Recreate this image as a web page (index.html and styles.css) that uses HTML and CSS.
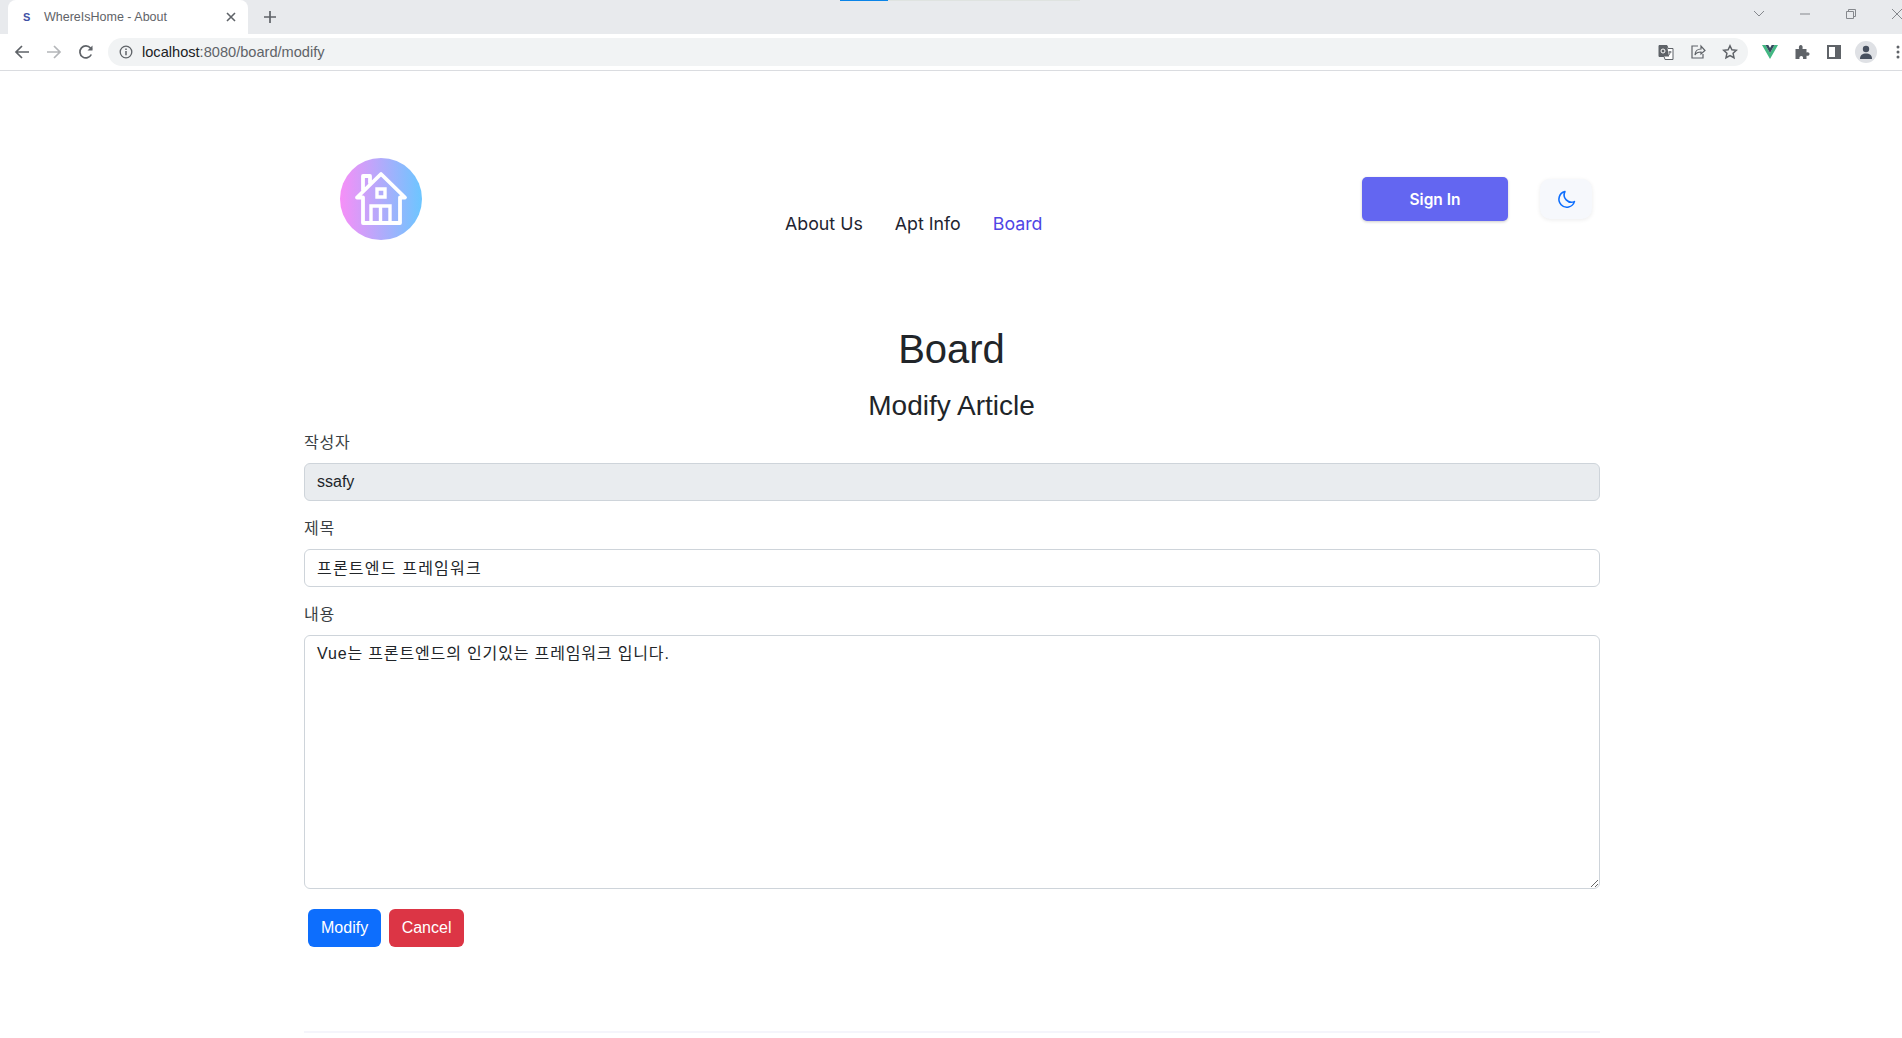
FILE: index.html
```html
<!DOCTYPE html>
<html lang="ko">
<head>
    <meta charset="UTF-8">
    <meta name="viewport" content="width=device-width, initial-scale=1.0">
    <title>WhereIsHome - About</title>
    <link rel="stylesheet" href="styles.css">
</head>
<body>
    <div class="browser">
        <div class="tab-strip">
            <div class="tab">
                <span class="tab-favicon">S</span>
                <span class="tab-title">WhereIsHome - About</span>
                <svg class="tab-close" width="10" height="10" viewBox="0 0 10 10"><path d="M1 1l8 8M9 1l-8 8" stroke="#5f6368" stroke-width="1.6"/></svg>
            </div>
            <svg class="tab-new" width="14" height="14" viewBox="0 0 14 14"><path d="M7 1v12M1 7h12" stroke="#5f6368" stroke-width="1.7"/></svg>
            <div class="share-bar"><span class="share-progress"></span></div>
            <div class="window-controls">
                <span class="win-slot"><svg width="14" height="10" viewBox="0 0 14 10"><path d="M2 2l5 5 5-5" fill="none" stroke="#85888d" stroke-width="1"/></svg></span>
                <span class="win-slot"><svg width="12" height="2" viewBox="0 0 12 2"><path d="M1 1h10" stroke="#85888d"/></svg></span>
                <span class="win-slot"><svg width="12" height="12" viewBox="0 0 12 12"><path d="M3.500 3V1.500h7v7H9M1.500 3.500h7v7h-7z" fill="none" stroke="#85888d"/></svg></span>
                <span class="win-slot"><svg width="12" height="12" viewBox="0 0 12 12"><path d="M1 1l10 10M11 1L1 11" stroke="#85888d"/></svg></span>
            </div>
        </div>
        <div class="toolbar">
            <svg class="nav-icon" width="16" height="16" viewBox="0 0 16 16"><path d="M15 8H2M8 2L2 8l6 6" fill="none" stroke="#5f6368" stroke-width="1.7"/></svg>
            <svg class="nav-icon" width="16" height="16" viewBox="0 0 16 16"><path d="M1 8h13M8 2l6 6-6 6" fill="none" stroke="#b4b6b9" stroke-width="1.7"/></svg>
            <svg class="nav-icon" width="16" height="16" viewBox="0 0 16 16"><path d="M13.300 10.500A6 6 0 1 1 12.500 4L14 5.500" fill="none" stroke="#5f6368" stroke-width="1.7"/><path d="M14.500 1.500v5h-5z" fill="#5f6368"/></svg>
            <div class="omnibox">
                <svg width="14" height="14" viewBox="0 0 14 14"><circle cx="7" cy="7" r="5.800" fill="none" stroke="#5f6368" stroke-width="1.300"/><path d="M7 6v4.200M7 3.600v1.300" stroke="#5f6368" stroke-width="1.500"/></svg>
                <span class="url"><b>localhost</b>:8080/board/modify</span>
                <div class="omnibox-actions">
                    <span class="icon-slot"><svg width="16" height="16" viewBox="0 0 16 16"><path d="M1 1.500h8l1 3h5v11H7l-1-3H1z" fill="#fff" stroke="#5f6368"/><path d="M1 1.500h8l2 11H1z" fill="#5f6368"/><circle cx="5" cy="7" r="2" fill="none" stroke="#fff"/><path d="M10.500 8h3M12 7v1c0 2-1 3-2 4" fill="none" stroke="#5f6368"/></svg></span>
                    <span class="icon-slot"><svg width="16" height="16" viewBox="0 0 16 16"><path d="M8 2H2v12h11v-4" fill="none" stroke="#5f6368" stroke-width="1.200"/><path d="M5 11c0-4 3-6 6-6V2l4 4.500L11 10V8c-3 0-5 1-6 3z" fill="#f1f3f4" stroke="#5f6368" stroke-width="1.200"/></svg></span>
                    <span class="icon-slot"><svg width="16" height="16" viewBox="0 0 16 16"><path d="M8 1.800l1.900 4 4.400.5-3.200 3 .9 4.400L8 11.500l-4 2.200.9-4.400-3.200-3 4.400-.5z" fill="none" stroke="#5f6368" stroke-width="1.500"/></svg></span>
                </div>
            </div>
            <div class="extensions">
                <span class="icon-slot"><svg width="16" height="14" viewBox="0 0 16 14"><path d="M0 0h3.500L8 8l4.500-8H16L8 14z" fill="#42b883"/><path d="M3.500 0h2.800L8 3l1.700-3h2.800L8 8z" fill="#35495e"/></svg></span>
                <span class="icon-slot"><svg width="16" height="16" viewBox="0 0 16 16"><path d="M1.500 5H5c-.5-3 .5-4 1.800-4s2.300 1 1.700 4h4v3.500c2-.6 3 .3 3 1.500s-1 2.200-3 1.700V15H9c.5-2-.5-3-1.700-3S5 13 5.500 15h-4z" fill="#5f6368"/></svg></span>
                <span class="icon-slot"><svg width="14" height="14" viewBox="0 0 14 14"><path d="M0 0h14v14H0z" fill="#5f6368"/><path d="M2 2h6v10H2z" fill="#fff"/></svg></span>
                <span class="icon-slot"><span class="avatar"><svg width="14" height="14" viewBox="0 0 14 14"><circle cx="7" cy="4" r="3.200" fill="#47505f"/><path d="M1 14c0-4 2.500-5.500 6-5.500s6 1.500 6 5.500z" fill="#47505f"/></svg></span></span>
                <span class="icon-slot"><svg width="4" height="14" viewBox="0 0 4 14"><circle cx="2" cy="2" r="1.500" fill="#5f6368"/><circle cx="2" cy="7" r="1.500" fill="#5f6368"/><circle cx="2" cy="12" r="1.500" fill="#5f6368"/></svg></span>
            </div>
        </div>
    </div>

    <div class="container">
        <header class="site-header">
            <svg class="logo" width="82" height="82" viewBox="0 0 82 82">
                <defs>
                    <linearGradient id="logo-grad" x1="0" y1="0" x2="1" y2="0">
                        <stop offset="0" stop-color="#f78ff7"/>
                        <stop offset="1" stop-color="#6cc6ff"/>
                    </linearGradient>
                </defs>
                <circle cx="41" cy="41" r="41" fill="url(#logo-grad)"/>
                <path d="M17 39.500L41 16l24 23.500h-5V65H23V39.500zM23 32V18h7v7" fill="none" stroke="#fff" stroke-width="3.800" stroke-linejoin="round" stroke-linecap="round"/>
                <path d="M37 31h8v8h-8zM31 65V48h19v17M40.500 48v17" fill="none" stroke="#fff" stroke-width="3.400"/>
            </svg>
            <nav class="main-nav">
                <a href="#">About Us</a>
                <a href="#">Apt Info</a>
                <a href="#" class="active">Board</a>
            </nav>
            <div class="header-actions">
                <button class="btn-signin">Sign In</button>
                <button class="btn-theme">
                    <svg width="19" height="19" viewBox="0 0 18 18"><path d="M7.500 1.500a7.500 7.500 0 1 0 9 9.500A7 7 0 0 1 7.500 1.500z" fill="none" stroke="#0d6efd" stroke-width="1.500" stroke-linejoin="round"/></svg>
                </button>
            </div>
        </header>

        <h1 class="page-title">Board</h1>
        <h3 class="page-subtitle">Modify Article</h3>

        <form class="article-form">
            <label class="form-label" for="writer">작성자</label>
            <input class="form-control" id="writer" type="text" value="ssafy" disabled>
            <label class="form-label" for="subject">제목</label>
            <input class="form-control subject-input" id="subject" type="text" value="프론트엔드 프레임워크">
            <label class="form-label" for="content">내용</label>
            <textarea class="form-control content-area" id="content">Vue는 프론트엔드의 인기있는 프레임워크 입니다.</textarea>
            <div class="form-buttons">
                <button type="button" class="btn btn-primary">Modify</button>
                <button type="button" class="btn btn-danger">Cancel</button>
            </div>
        </form>
        <div class="footer-line"></div>
    </div>
</body>
</html>
```
FILE: styles.css
```css
html, body {
    height: 100%;
}
body {
    margin: 0;
    overflow: hidden;
    background: #fff;
    color: #212529;
    font-family: "Liberation Sans", "Noto Sans CJK KR", sans-serif;
    font-size: 16px;
}

/* browser frame */
.browser {
    border-bottom: 1px solid #dadce0;
}
.tab-strip {
    height: 34px;
    background: #e8eaed;
    display: flex;
    align-items: center;
    position: relative;
}
.tab {
    width: 240px;
    height: 34px;
    margin-left: 8px;
    padding: 0 12px;
    box-sizing: border-box;
    background: #fff;
    border-radius: 8px 8px 0 0;
    display: flex;
    align-items: center;
    font-size: 12.500px;
    color: #5f6368;
}
.tab-favicon {
    width: 16px;
    margin-left: 3px;
    font-size: 11px;
    font-weight: 700;
    color: #3f51a5;
}
.tab-title {
    margin-left: 5px;
    flex: 1;
}
.tab-new {
    margin-left: 15px;
}
.share-bar {
    position: absolute;
    left: 840px;
    top: 0;
    width: 240px;
    height: 1px;
    background: #dfe3e0;
}
.share-progress {
    display: block;
    width: 48px;
    height: 1px;
    background: #0a84e8;
}
.window-controls {
    margin-left: auto;
    margin-right: -18px;
    margin-top: -6px;
    display: flex;
    align-items: center;
}
.win-slot {
    width: 46px;
    display: flex;
    justify-content: center;
    flex: none;
}

.toolbar {
    height: 36px;
    display: flex;
    align-items: center;
    padding-left: 14px;
    gap: 16px;
}
.nav-icon {
    flex: none;
}
.omnibox {
    width: 1640px;
    height: 28px;
    margin-left: -2px;
    padding: 0 2px 0 11px;
    box-sizing: border-box;
    background: #f1f3f4;
    border-radius: 14px;
    display: flex;
    align-items: center;
    flex: none;
    font-size: 14.600px;
    color: #5f6368;
}
.url {
    margin-left: 9px;
}
.url b {
    font-weight: 400;
    color: #202124;
}
.omnibox-actions {
    margin-left: auto;
    display: flex;
}
.icon-slot {
    width: 32px;
    display: flex;
    align-items: center;
    justify-content: center;
    flex: none;
}
.extensions {
    margin-left: -10px;
    display: flex;
    align-items: center;
    flex: none;
}
.avatar {
    width: 22px;
    height: 22px;
    border-radius: 50%;
    background: #dfe1e5;
    display: flex;
    align-items: center;
    justify-content: center;
    overflow: hidden;
}

/* page */
.container {
    width: 1296px;
    margin-left: 304px;
}
.site-header {
    height: 180px;
    margin-top: 38px;
    padding-left: 36px;
    box-sizing: border-box;
    display: flex;
    align-items: center;
    font-family: Inter, sans-serif;
}
.logo {
    flex: none;
}
.main-nav {
    margin-left: 363px;
    margin-top: 49px;
    display: flex;
    gap: 32px;
}
.main-nav a {
    color: #1e2430;
    text-decoration: none;
    font-size: 17.800px;
    font-weight: 400;
}
.main-nav a.active {
    color: #4f46e5;
}
.header-actions {
    margin-left: auto;
    margin-right: 8px;
    display: flex;
    align-items: center;
    gap: 32px;
}
.btn-signin {
    width: 146px;
    height: 44px;
    border: none;
    border-radius: 5px;
    background: #6366f1;
    color: #fff;
    font-family: Inter, sans-serif;
    font-size: 15.500px;
    font-weight: 600;
    box-shadow: 0 1px 3px rgba(0, 0, 0, 0.2);
}
.btn-theme {
    width: 52px;
    height: 40px;
    border: none;
    border-radius: 10px;
    background: #f6f8fc;
    box-shadow: 0 1px 4px rgba(0, 0, 0, 0.08);
    display: flex;
    align-items: center;
    justify-content: center;
}
.page-title {
    margin: 32px 0 0;
    padding-right: 1px;
    height: 56px;
    line-height: 56px;
    text-align: center;
    font-size: 40px;
    font-weight: 400;
}
.page-subtitle {
    margin: 9px 0 0;
    padding-right: 1px;
    height: 40px;
    line-height: 40px;
    text-align: center;
    font-size: 28px;
    font-weight: 400;
}
.article-form {
    margin-top: 5px;
    display: flex;
    flex-direction: column;
}
.form-label {
    height: 24px;
    line-height: 24px;
    margin-bottom: 8px;
    letter-spacing: 0.8px;
    color: #3a3f44;
}
.form-control {
    height: 38px;
    padding: 6px 12px;
    margin-bottom: 16px;
    box-sizing: border-box;
    border: 1px solid #ced4da;
    border-radius: 6px;
    background: #fff;
    color: #212529;
    font-family: "Liberation Sans", "Noto Sans CJK KR", sans-serif;
    font-size: 16px;
    line-height: 24px;
    outline: none;
}
.form-control:disabled {
    background: #e9ecef;
    opacity: 1;
}
.subject-input {
    letter-spacing: 1.200px;
    padding-bottom: 8px;
}
.content-area {
    height: 254px;
    margin-bottom: 20px;
    letter-spacing: 0.850px;
}
.form-buttons {
    display: flex;
    gap: 8px;
    padding-left: 4px;
}
.btn {
    height: 38px;
    padding: 0 13px;
    border: none;
    border-radius: 6px;
    color: #fff;
    font-family: "Liberation Sans", sans-serif;
    font-size: 16px;
}
.btn-primary { background: #0d6efd; }
.btn-danger { background: #dc3545; padding: 0 12.500px; }
.footer-line {
    height: 2px;
    margin-top: 84px;
    background: #f5f5fb;
}
```
